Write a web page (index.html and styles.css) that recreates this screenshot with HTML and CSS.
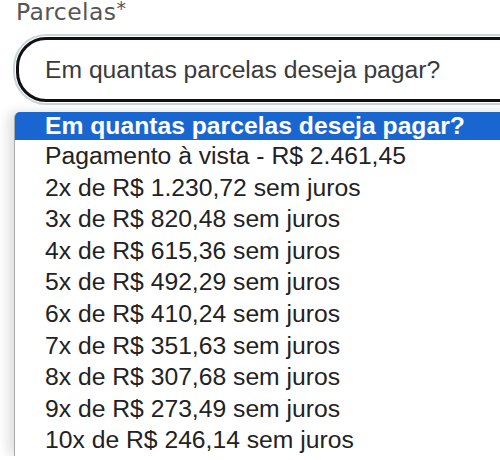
FILE: index.html
```html
<!DOCTYPE html>
<html lang="pt-BR">
<head>
<meta charset="utf-8">
<title>Parcelas</title>
<link rel="stylesheet" href="styles.css">
</head>
<body>
<div class="field">
  <label class="label">Parcelas<span class="req">*</span></label>
  <div class="select">Em quantas parcelas deseja pagar?</div>
  <ul class="options">
    <li class="opt selected">Em quantas parcelas deseja pagar?</li>
    <li class="opt">Pagamento à vista - R$ 2.461,45</li>
    <li class="opt">2x de R$ 1.230,72 sem juros</li>
    <li class="opt">3x de R$ 820,48 sem juros</li>
    <li class="opt">4x de R$ 615,36 sem juros</li>
    <li class="opt">5x de R$ 492,29 sem juros</li>
    <li class="opt">6x de R$ 410,24 sem juros</li>
    <li class="opt">7x de R$ 351,63 sem juros</li>
    <li class="opt">8x de R$ 307,68 sem juros</li>
    <li class="opt">9x de R$ 273,49 sem juros</li>
    <li class="opt">10x de R$ 246,14 sem juros</li>
  </ul>
</div>
</body>
</html>
```

FILE: styles.css
```css
html, body {
  margin: 0;
  padding: 0;
  background: #fff;
  overflow: hidden;
}

.field {
  padding-left: 16px;
}

.label {
  display: block;
  font-family: "DejaVu Sans", "Open Sans", sans-serif;
  font-size: 23.5px;
  line-height: 24px;
  letter-spacing: 0.4px;
  color: #555;
}

.req {
  font-size: 19px;
  vertical-align: top;
  line-height: 17px;
}

.select {
  margin-top: 13px;
  width: 560px;
  height: 65px;
  box-sizing: border-box;
  border: 3px solid #111;
  border-radius: 30px;
  box-shadow: 0 0 0 1px #fff, 0 0 0 3px #c8d5da;
  display: flex;
  align-items: center;
  padding-left: 26px;
  font-family: "Liberation Sans", Arial, sans-serif;
  font-size: 24.7px;
  color: #3a3a3a;
}

.options {
  list-style: none;
  margin: 10px 0 0 -2px;
  padding: 0;
  width: 620px;
  background: #fff;
  border-left: 1px solid #a8a8a8;
  border-top-left-radius: 6px;
  box-shadow: -6px 0 12px rgba(0, 0, 0, 0.13);
  font-family: "Liberation Sans", Arial, sans-serif;
  font-size: 24.7px;
  color: #222;
}

.opt {
  padding-left: 30px;
  line-height: 31.6px;
  white-space: nowrap;
}

.opt.selected {
  background: #1a66d1;
  color: #fff;
  font-weight: bold;
  line-height: 28px;
  border-top-left-radius: 5px;
}
```
